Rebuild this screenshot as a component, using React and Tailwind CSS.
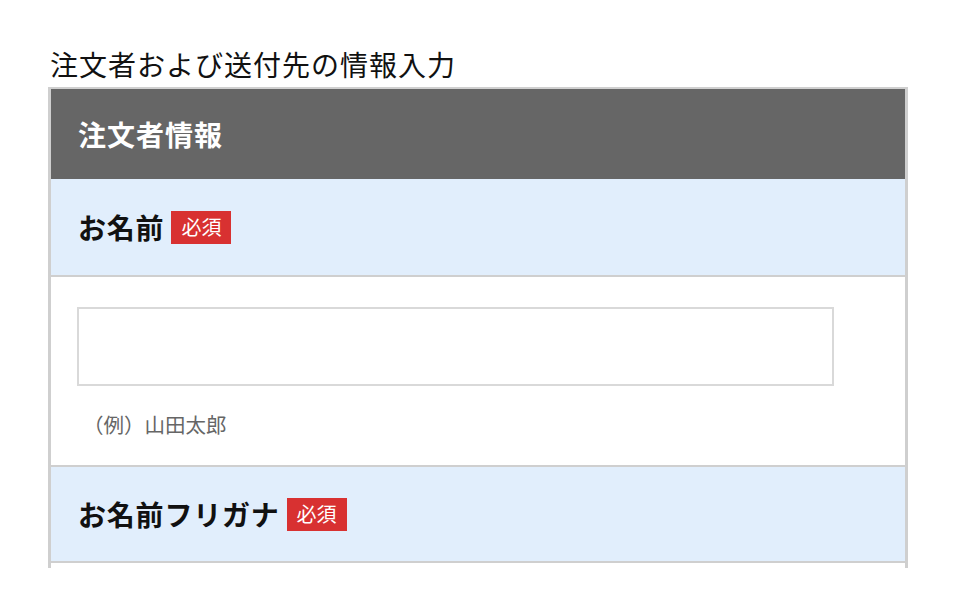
import React from 'react';

const font = { fontFamily: '"Noto Sans CJK JP", "Noto Sans", sans-serif' };

function Required() {
  return (
    <span className="ml-[7px] inline-flex h-[33px] items-center bg-[#d83131] px-[10px] text-[20px] font-normal leading-none tracking-normal text-white">
      必須
    </span>
  );
}

function LabelRow({ label, className }) {
  return (
    <div className={`flex items-center bg-[#e1eefc] px-[27px] ${className}`}>
      <span className="text-[28px] font-bold leading-none tracking-[0.8px] text-[#111]">{label}</span>
      <Required />
    </div>
  );
}

export default function App() {
  return (
    <div className="min-h-[597px] w-[960px] bg-white pt-[44px] pl-[48px]" style={font}>
      <h1 className="ml-[2px] text-[28px] leading-[40px] tracking-[1px] text-[#111]">注文者および送付先の情報入力</h1>

      <div className="mt-[3px] w-[860px] border-x-[3px] border-t-2 border-[#cfcfcf]">
        {/* Header */}
        <div className="flex h-[90px] items-center bg-[#666666] px-[27px]">
          <span className="text-[28px] font-bold tracking-[1px] text-white">注文者情報</span>
        </div>

        <LabelRow label="お名前" className="h-[98px] border-b-2 border-[#cfcfcf]" />

        <div className="bg-white px-[26px] pt-[30px] pb-[27px]">
          <input
            type="text"
            className="block h-[79px] w-[757px] border-2 border-[#d9d9d9] bg-white outline-none"
          />
          <p className="mt-[24px] pl-[6px] text-[20.5px] leading-[28px] text-[#666]">（例）山田太郎</p>
        </div>

        <LabelRow label="お名前フリガナ" className="h-[98px] border-y-2 border-[#cfcfcf]" />

        <div className="h-[5px] bg-white" />
      </div>
    </div>
  );
}
